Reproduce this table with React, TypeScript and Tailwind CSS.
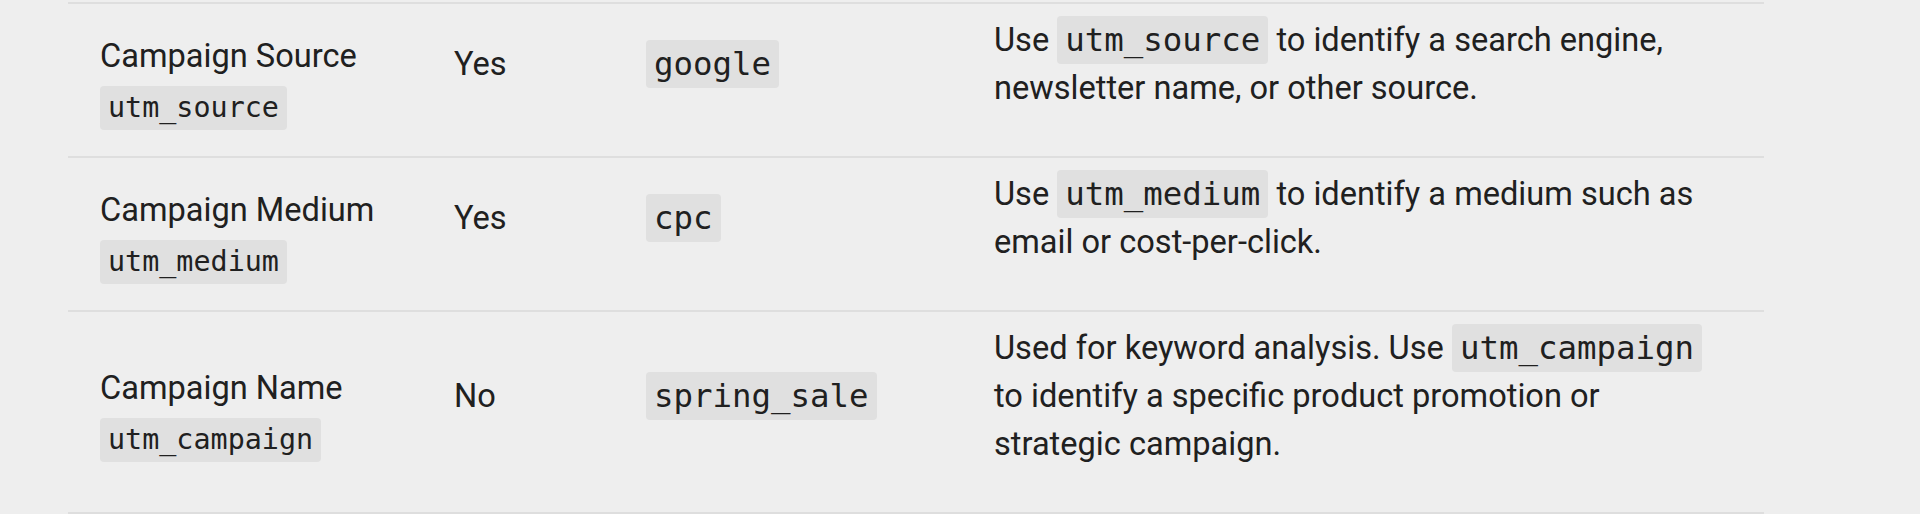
import React from 'react';

type Row = {
  name: string;
  param: string;
  required: string;
  example: string;
  description: React.ReactNode;
};

const Code = ({ children }: { children: React.ReactNode }) => (
  <code className="rounded-[4px] bg-[#e0e0e0] px-[8px] py-[5px] font-['DejaVu_Sans_Mono',monospace] text-[32.4px]">
    {children}
  </code>
);

const rows: Row[] = [
  {
    name: 'Campaign Source',
    param: 'utm_source',
    required: 'Yes',
    example: 'google',
    description: (
      <>
        Use <Code>utm_source</Code> to identify a search engine, newsletter name, or other source.
      </>
    ),
  },
  {
    name: 'Campaign Medium',
    param: 'utm_medium',
    required: 'Yes',
    example: 'cpc',
    description: (
      <>
        Use <Code>utm_medium</Code> to identify a medium such as email or cost-per-click.
      </>
    ),
  },
  {
    name: 'Campaign Name',
    param: 'utm_campaign',
    required: 'No',
    example: 'spring_sale',
    description: (
      <>
        Used for keyword analysis. Use <Code>utm_campaign</Code> to identify a specific product promotion or
        strategic campaign.
      </>
    ),
  },
];

export default function App() {
  return (
    <div className="min-h-screen w-full bg-[#eeeeee] pt-[2px] font-['Roboto',sans-serif] text-[32.6px] leading-[48px] text-[#202020]">
      <div className="ml-[68px] w-[1696px] border-b-2 border-[#dedede]">
        {rows.map((row) => (
          <div
            key={row.param}
            className="grid grid-cols-[354px_192px_348px_726px] items-center border-t-2 border-[#dedede] pb-[12px] pl-[32px] pt-[12px]"
          >
            {/* Имя параметра */}
            <div>
              <div className="h-[48px]">{row.name}</div>
              <div className="flex h-[48px] items-start pt-[6px]">
                <code className="block h-[44px] rounded-[4px] bg-[#e0e0e0] px-[8px] font-['DejaVu_Sans_Mono',monospace] text-[28.4px] leading-[44px]">
                  {row.param}
                </code>
              </div>
            </div>

            <div className="pb-[32px]">{row.required}</div>

            <div className="pb-[32px]">
              <Code>{row.example}</Code>
            </div>

            <p className="mb-[32px] self-start">{row.description}</p>
          </div>
        ))}
      </div>
    </div>
  );
}
